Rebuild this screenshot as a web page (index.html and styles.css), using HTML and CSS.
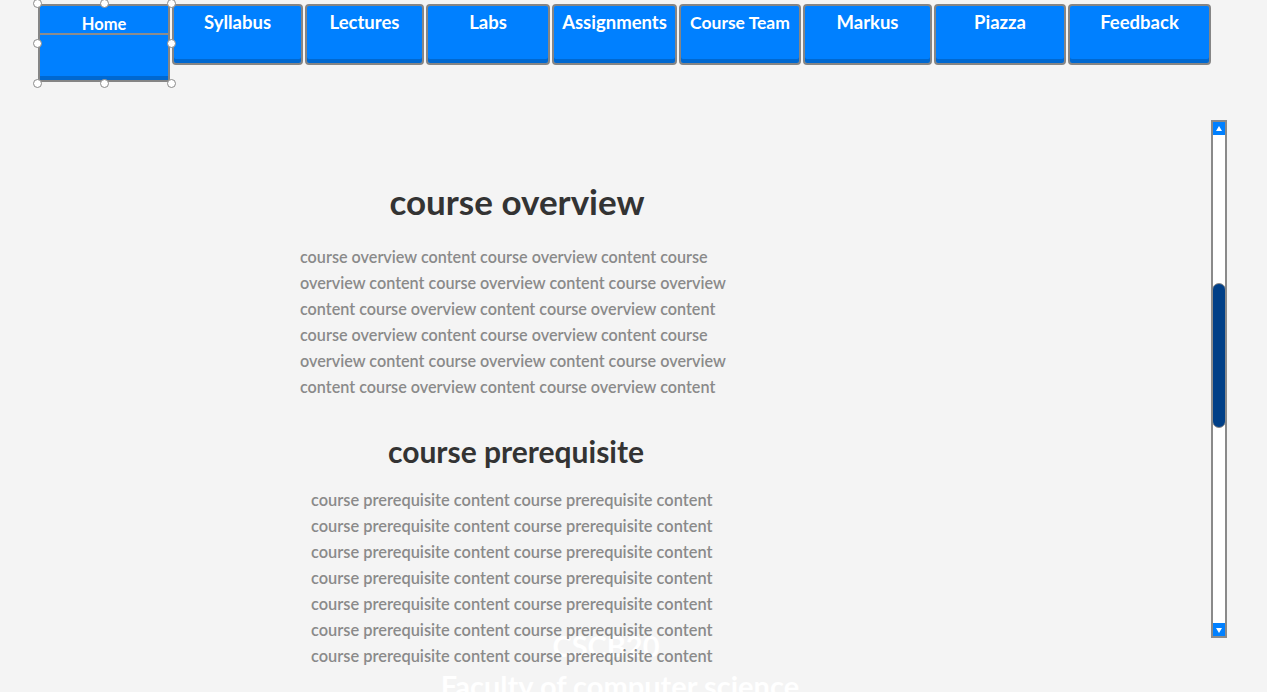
FILE: index.html
```html
<!DOCTYPE html>
<html>
<head>
<meta charset="utf-8">
<link rel="stylesheet" href="styles.css">
</head>
<body>
<nav class="nav">
  <div class="btn btn-home">
    <div class="home-label">Home</div>
    <div class="home-lower"></div>
    <span class="handle h-tl"></span><span class="handle h-tm"></span><span class="handle h-tr"></span>
    <span class="handle h-ml"></span><span class="handle h-mr"></span>
    <span class="handle h-bl"></span><span class="handle h-bm"></span><span class="handle h-br"></span>
  </div>
  <div class="btn w-syl">Syllabus</div>
  <div class="btn w-lec">Lectures</div>
  <div class="btn w-lab">Labs</div>
  <div class="btn w-asg">Assignments</div>
  <div class="btn w-team">Course Team</div>
  <div class="btn w-mark">Markus</div>
  <div class="btn w-piazza">Piazza</div>
  <div class="btn w-fb">Feedback</div>
</nav>

<main class="main">
  <section class="section">
    <h1 class="title">course overview</h1>
    <p class="text text-left">course overview content course overview content course<br>overview content course overview content course overview<br>content course overview content course overview content<br>course overview content course overview content course<br>overview content course overview content course overview<br>content course overview content course overview content</p>
  </section>
  <section class="section">
    <h2 class="subtitle">course prerequisite</h2>
    <p class="text text-pre">course prerequisite content course prerequisite content<br>course prerequisite content course prerequisite content<br>course prerequisite content course prerequisite content<br>course prerequisite content course prerequisite content<br>course prerequisite content course prerequisite content<br>course prerequisite content course prerequisite content<br>course prerequisite content course prerequisite content</p>
  </section>
</main>

<footer class="footer">
  <div class="foot-code">CSCB20</div>
  <div class="foot-fac">Faculty of computer science</div>
</footer>

<div class="scrollbar">
  <div class="sb-btn"><svg width="12" height="12" viewBox="0 0 12 12"><path d="M6 3 L9 8 H3 Z" fill="#fff"/></svg></div>
  <div class="sb-track"><div class="sb-thumb"></div></div>
  <div class="sb-btn"><svg width="12" height="12" viewBox="0 0 12 12"><path d="M3 4 H9 L6 9 Z" fill="#fff"/></svg></div>
</div>
</body>
</html>
```
FILE: styles.css
```css
html, body {
  margin: 0;
  padding: 0;
}
body {
  background: #f4f4f4;
  font-family: Lato, "Open Sans", sans-serif;
  width: 1267px;
  height: 692px;
  overflow: hidden;
  position: relative;
}
.nav {
  display: flex;
  align-items: flex-start;
  gap: 2px;
  padding: 4px 0 0 38px;
}
.btn {
  box-sizing: border-box;
  height: 61px;
  border: 2px solid #858585;
  border-radius: 4px;
  background: #0080ff;
  box-shadow: inset 0 -4px 0 #0068d0;
  color: #fff;
  font-weight: 700;
  font-size: 18.5px;
  text-align: center;
  padding-top: 6px;
  line-height: 21px;
  flex: none;
  white-space: nowrap;
}
.btn-home {
  position: relative;
  width: 132px;
  height: 78px;
  padding: 0;
  border-radius: 2px;
}
.home-label {
  height: 29px;
  font-size: 16.5px;
  line-height: 17px;
  padding-top: 10px;
  box-sizing: border-box;
  border-bottom: 2px solid #8c8c8c;
}
.handle {
  position: absolute;
  width: 9px;
  height: 9px;
  border-radius: 50%;
  background: #fff;
  border: 1px solid #8a8a8a;
  box-sizing: border-box;
}
.h-tl { left: -7px; top: -7px; }
.h-tm { left: 60px; top: -7px; }
.h-tr { left: 127px; top: -7px; }
.h-ml { left: -7px; top: 33px; }
.h-mr { left: 127px; top: 33px; }
.h-bl { left: -7px; top: 73px; }
.h-bm { left: 60px; top: 73px; }
.h-br { left: 127px; top: 73px; }
.w-syl { width: 131px; }
.w-lec { width: 119px; }
.w-lab { width: 124px; }
.w-asg { width: 125px; }
.w-team { width: 122px; font-size: 17.5px; }
.w-mark { width: 129px; }
.w-piazza { width: 132px; }
.w-fb { width: 143px; }

.main {
  position: relative;
  z-index: 1;
  width: 440px;
  margin: 99px 0 0 300px;
}
.section {
  display: flex;
  flex-direction: column;
}
.title {
  margin: 0;
  font-size: 35px;
  line-height: 40px;
  color: #333;
  font-weight: 700;
  text-align: center;
  width: 434px;
}
.subtitle {
  margin: 33px 0 0;
  font-size: 30px;
  line-height: 36px;
  color: #333;
  font-weight: 700;
  text-align: center;
  width: 432px;
}
.text {
  margin: 0;
  color: #8a8a8a;
  font-size: 16.2px;
  line-height: 26px;
  font-weight: 600;
  white-space: nowrap;
}
.text-left {
  margin-top: 23px;
}
.text-pre {
  margin-top: 18px;
  padding-left: 11px;
  font-size: 16.4px;
}

.footer {
  position: absolute;
  z-index: 0;
  left: 420px;
  top: 626px;
  width: 400px;
  color: #fff;
  font-weight: 700;
  font-size: 29px;
  text-align: center;
  line-height: 40px;
}
.foot-code { padding-right: 28px; }

.scrollbar {
  position: absolute;
  left: 1211px;
  top: 120px;
  width: 16px;
  height: 518px;
  box-sizing: border-box;
  border: 2px solid #8a8a8a;
  background: #fff;
  display: flex;
  flex-direction: column;
}
.sb-btn {
  height: 13px;
  background: #0080ff;
  display: flex;
  align-items: center;
  justify-content: center;
  flex: none;
}
.sb-btn svg { width: 12px; height: 12px; }
.sb-track {
  flex: 1;
  position: relative;
}
.sb-thumb {
  position: absolute;
  left: -1px;
  right: -1px;
  top: 148px;
  height: 143px;
  background: #003f87;
  border: 1px solid #8a8a8a;
  border-radius: 7px;
}
```
